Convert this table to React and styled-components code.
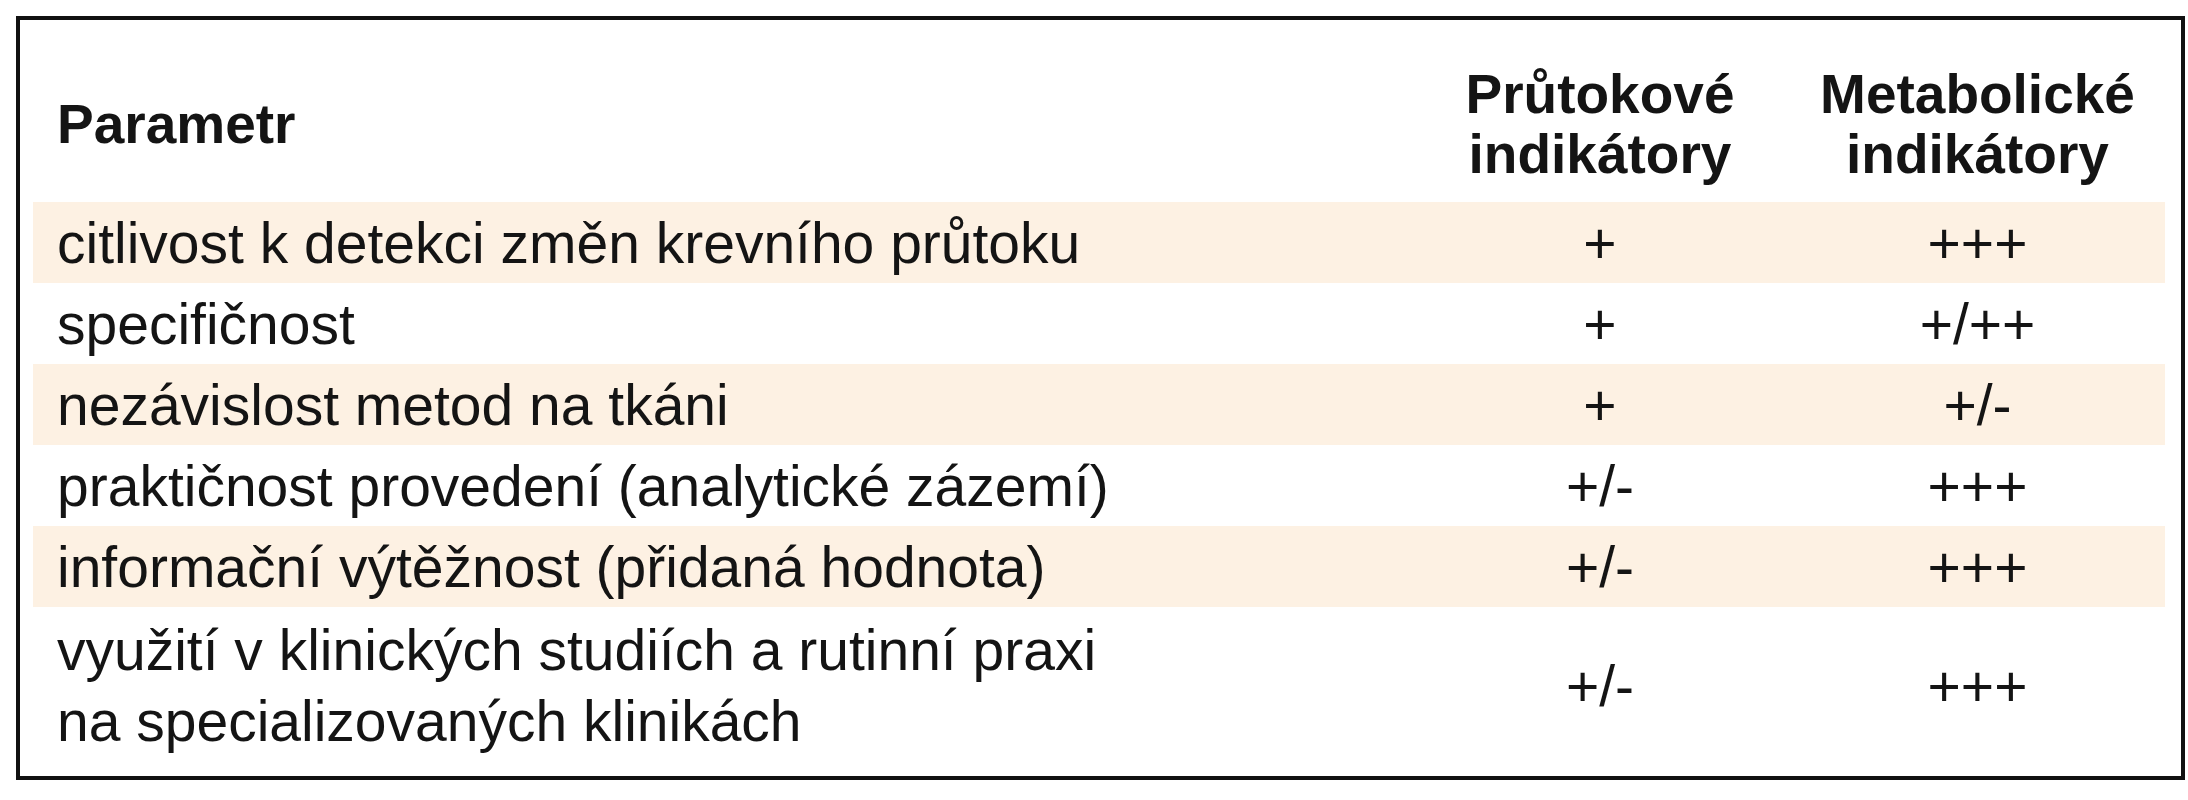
import React from "react";
import styled, { createGlobalStyle } from "styled-components";

const Global = createGlobalStyle`
  html, body { margin: 0; padding: 0; background: #ffffff; }
  body { font-family: "Liberation Sans", Arial, sans-serif; color: #141414; }
`;

const Page = styled.div`
  padding: 16px 3px 20px 16px;
  width: 2188px;
  box-sizing: border-box;
`;

const Frame = styled.div`
  border: 4px solid #111111;
  box-sizing: border-box;
  width: 2169px;
  height: 764px;
  padding: 0 16px 11px 13px;
  display: flex;
  flex-direction: column;
`;

const Grid = `
  display: grid;
  grid-template-columns: 1fr 380px 375px;
  align-items: center;
`;

const HeaderRow = styled.div`
  ${Grid}
  padding: 44px 0 18px;
  height: 182px;
  box-sizing: border-box;
`;

const HeadCell = styled.div`
  font-weight: 700;
  font-size: 55px;
  line-height: 60px;
  text-align: ${(p) => (p.$center ? "center" : "left")};
  padding-left: ${(p) => (p.$center ? "0" : "24px")};
`;

const Row = styled.div`
  ${Grid}
  height: ${(p) => (p.$tall ? "158px" : "81px")};
  background: ${(p) => (p.$shade ? "#fdf1e3" : "transparent")};
  flex-shrink: 0;
`;

const Label = styled.div`
  font-size: 57px;
  line-height: ${(p) => (p.$tall ? "71px" : "70px")};
  padding-left: 24px;
`;

const Value = styled.div`
  font-size: 57px;
  line-height: 70px;
  text-align: center;
`;

const rows = [
  { label: ["citlivost k detekci změn krevního průtoku"], a: "+", b: "+++" },
  { label: ["specifičnost"], a: "+", b: "+/++" },
  { label: ["nezávislost metod na tkáni"], a: "+", b: "+/-" },
  { label: ["praktičnost provedení (analytické zázemí)"], a: "+/-", b: "+++" },
  { label: ["informační výtěžnost (přidaná hodnota)"], a: "+/-", b: "+++" },
  {
    label: ["využití v klinických studiích a rutinní praxi", "na specializovaných klinikách"],
    a: "+/-",
    b: "+++",
  },
];

export default function App() {
  return (
    <>
      <Global />
      <Page>
        <Frame>
          <HeaderRow>
            <HeadCell>Parametr</HeadCell>
            <HeadCell $center>
              Průtokové
              <br />
              indikátory
            </HeadCell>
            <HeadCell $center>
              Metabolické
              <br />
              indikátory
            </HeadCell>
          </HeaderRow>
          {rows.map((r, i) => {
            const tall = r.label.length > 1;
            return (
              <Row key={i} $shade={i % 2 === 0} $tall={tall}>
                <Label $tall={tall}>
                  {r.label.map((l, j) => (
                    <React.Fragment key={j}>
                      {j > 0 && <br />}
                      {l}
                    </React.Fragment>
                  ))}
                </Label>
                <Value>{r.a}</Value>
                <Value>{r.b}</Value>
              </Row>
            );
          })}
        </Frame>
      </Page>
    </>
  );
}
